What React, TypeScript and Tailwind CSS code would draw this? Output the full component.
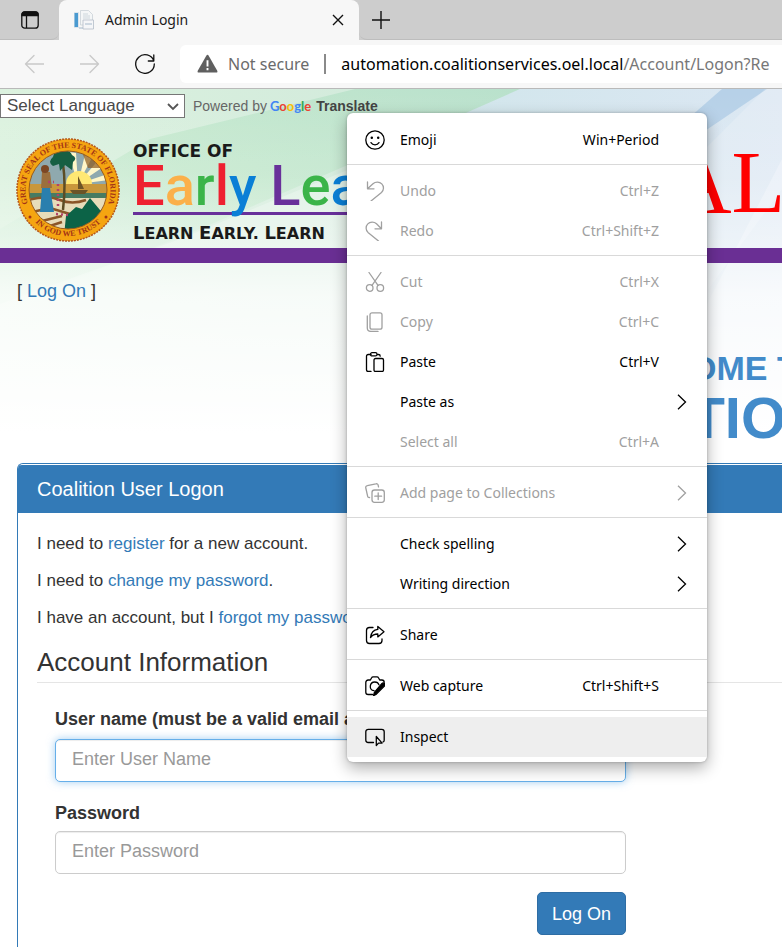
import type { ReactNode } from "react";

const SANS = "font-['Liberation_Sans',Arial,sans-serif]";
const UI = "font-['Noto_Sans','Open_Sans',sans-serif]";

function Icon({ children, className = "" }: { children: ReactNode; className?: string }) {
  return (
    <svg viewBox="0 0 20 20" fill="none" stroke="currentColor" strokeWidth="1.3" strokeLinecap="round" strokeLinejoin="round" className={`size-5 ${className}`} aria-hidden="true">
      {children}
    </svg>
  );
}

const icons = {
  emoji: (
    <Icon>
      <circle cx="10" cy="10" r="9.2" />
      <path d="M6 12.6c1.8 2.9 6.2 2.9 8 0" />
      <circle cx="6.8" cy="7.8" r=".6" fill="currentColor" />
      <circle cx="13.2" cy="7.8" r=".6" fill="currentColor" />
    </Icon>
  ),
  undo: (
    <Icon>
      <path d="M2.5 1v6.8H9M2.8 7.5 8 2.7c2.5-2.3 6.5-2.2 8.8.2 2.3 2.4 2.2 6.2-.3 8.5L6 20" />
    </Icon>
  ),
  redo: (
    <Icon>
      <path d="M16.5 1v6.8H10M16.2 7.5 11.5 2.7C9 .4 5 .5 2.8 2.9.5 5.3.6 9.1 3 11.4L13.5 20" />
    </Icon>
  ),
  cut: (
    <Icon>
      <path d="M4 .5 13 13.4M16 .5 7 13.4" />
      <circle cx="4.7" cy="16" r="3.3" />
      <circle cx="15.3" cy="16" r="3.3" />
    </Icon>
  ),
  copy: (
    <Icon>
      <rect x="5" y=".8" width="12" height="16.4" rx="2" />
      <path d="M2.3 4v12c0 2 1.5 3.4 3.5 3.4H13" />
    </Icon>
  ),
  paste: (
    <Icon>
      <path d="M6 2.5H3.2c-1 0-1.7.7-1.7 1.700v13.600c0 1 .7 1.700 1.700 1.700H6M12.500 2.500h1c1 0 1.700.7 1.700 1.700" />
      <rect x="5.5" y=".7" width="6.5" height="3.2" rx="1.5" />
      <rect x="9" y="6.5" width="9.5" height="13" rx="1.5" />
    </Icon>
  ),
  collections: (
    <Icon>
      <rect x="7" y="7" width="12.3" height="12.3" rx="2.5" />
      <path d="M13.2 9.8v6.8M9.8 13.2h6.8M4.6 14.500c-1 .2-1.800-.4-2-1.400L.8 5c-.3-1.200.4-2.200 1.500-2.400L10.800.8c1.200-.3 2.200.4 2.400 1.500l.3 1.600" />
    </Icon>
  ),
  share: (
    <Icon>
      <path d="M8 2.5H4.5c-1.700 0-3 1.300-3 3v10c0 1.700 1.300 3 3 3h9.500c1.700 0 3-1.300 3-3v-1.500" />
      <path d="M12.8 1.5 19 6.700l-6.200 5.200V9c-3 0-5.300.8-7.300 3.500C6 8.500 8.500 4.800 12.800 4.400z" />
    </Icon>
  ),
  capture: (
    <Icon>
      <path d="M7.5 18.5H3.2C1.8 18.5.8 17.500.8 16.200V6.400C.8 5 1.800 4 3.200 4h2.200l1.200-2.200c.3-.6.8-.9 1.500-.9h3.900c.7 0 1.200.3 1.500.9L14.700 4h2.200c1.300 0 2.300 1 2.300 2.300" />
      <path d="M9 14.700c-2.300-.4-3.900-2.300-3.700-4.600.2-2.300 2.100-4.100 4.500-4.100 2 0 3.600 1.200 4.200 2.900" />
      <path d="M16.800 7.600c.9-.9 2.200-.8 2.800 0 .6.700.5 1.700-.2 2.500l-8 8-2.900 1.600.9-3.300z" fill="currentColor" />
    </Icon>
  ),
  inspect: (
    <Icon>
      <path d="M8.5 15.5H3.3C1.900 15.500.8 14.400.8 13V4.800c0-1.400 1.100-2.500 2.500-2.500h13.400c1.400 0 2.500 1.100 2.500 2.500v8.400c0 .8-.5 1.500-1.200 1.800" />
      <path d="M11.3 9.500v9l2.200-2.400h3.600z" />
    </Icon>
  ),
};

type Item = { label: string; keys?: string; icon?: ReactNode; sub?: boolean; off?: boolean; active?: boolean };

const groups: Item[][] = [
  [{ label: "Emoji", keys: "Win+Period", icon: icons.emoji }],
  [
    { label: "Undo", keys: "Ctrl+Z", icon: icons.undo, off: true },
    { label: "Redo", keys: "Ctrl+Shift+Z", icon: icons.redo, off: true },
  ],
  [
    { label: "Cut", keys: "Ctrl+X", icon: icons.cut, off: true },
    { label: "Copy", keys: "Ctrl+C", icon: icons.copy, off: true },
    { label: "Paste", keys: "Ctrl+V", icon: icons.paste },
    { label: "Paste as", sub: true },
    { label: "Select all", keys: "Ctrl+A", off: true },
  ],
  [{ label: "Add page to Collections", icon: icons.collections, sub: true, off: true }],
  [
    { label: "Check spelling", sub: true },
    { label: "Writing direction", sub: true },
  ],
  [{ label: "Share", icon: icons.share }],
  [{ label: "Web capture", keys: "Ctrl+Shift+S", icon: icons.capture }],
  [{ label: "Inspect", icon: icons.inspect, active: true }],
];

function ContextMenu() {
  return (
    <div role="menu" className={`absolute left-[347px] top-[113px] z-20 w-[360px] rounded-md bg-white pt-[7px] pb-[5px] shadow-[0_6px_16px_rgba(0,0,0,0.32),0_0_3px_rgba(0,0,0,0.25)] ${UI}`}>
      {groups.map((items, g) => (
        <div key={g} className={g > 0 ? "mt-1 border-t border-[#d9d9d9] pt-1.5" : ""}>
          {items.map((it) => (
            <button
              key={it.label}
              type="button"
              role="menuitem"
              disabled={it.off}
              className={`flex h-10 w-full items-center pl-[18px] text-left text-sm ${it.off ? "text-[#a0a0a0]" : "text-black"} ${it.active ? "bg-[#eeeeee]" : ""}`}
            >
              <span className="mr-[15px] flex size-5 shrink-0">{it.icon}</span>
              <span className="flex-1">{it.label}</span>
              {it.keys && <span className="mr-12">{it.keys}</span>}
              {it.sub && (
                <svg viewBox="0 0 10 16" fill="none" stroke="currentColor" strokeWidth="1.3" className="mr-5 h-4 w-2.5" aria-hidden="true">
                  <path d="M1 .8 8.5 8 1 15.2" />
                </svg>
              )}
            </button>
          ))}
        </div>
      ))}
    </div>
  );
}

function BrowserChrome() {
  return (
    <header className={`shrink-0 border-b border-[#b9b9b9] bg-[#f7f7f7] ${UI}`}>
      <div className="flex h-10 bg-[#cdcdcd]">
        <button type="button" aria-label="Tab actions" className="flex w-[59px] items-center justify-center rounded-br-lg border-b border-[#bdbdbd]">
          <svg viewBox="0 0 18 18" className="size-[18px]" fill="none" stroke="#111" strokeWidth="1.3" aria-hidden="true">
            <rect x=".8" y=".8" width="16.4" height="16.4" rx="3" />
            <path d="M1 4.500V3.500Q1 1 3.500 1h11Q17 1 17 3.500v1z" fill="#111" />
            <path d="M5.500 4.500V17" />
          </svg>
        </button>
        <div className="flex w-[300px] items-center rounded-t-lg bg-[#f7f7f7] pl-[15px] pr-[15px]">
          <svg viewBox="0 0 20 20" className="size-5 shrink-0" aria-hidden="true">
            <path d="M0 2h5v16H0z" fill="#dde5ec" />
            <path d="M.5 3H4v14H.5z" fill="#4a9ad0" />
            <path d="M6.500.5h8l4 4V15h-12z" fill="#f4f6f7" stroke="#c4cdd2" strokeWidth=".7" />
            <path d="M9 4h5M9 6h7M9 8h7" stroke="#c5d0d7" strokeWidth=".8" />
            <path d="M9 10h10.500v9H9z" fill="#f5f6f8" stroke="#b4bdc8" strokeWidth=".8" />
            <path d="M11 14h7M5 18h4" stroke="#a6b9cb" />
          </svg>
          <span className="ml-[11px] flex-1 text-sm text-[#1b1b1b]">Admin Login</span>
          <button type="button" aria-label="Close tab">
            <svg viewBox="0 0 12 12" className="size-3" stroke="#111" strokeWidth="1.4" aria-hidden="true">
              <path d="M1 1l10 10M11 1 1 11" />
            </svg>
          </button>
        </div>
        <button type="button" aria-label="New tab" className="flex flex-1 items-center rounded-bl-lg border-b border-[#bdbdbd] pl-[13px]">
          <svg viewBox="0 0 18 18" className="size-[18px]" stroke="#111" strokeWidth="1.4" aria-hidden="true">
            <path d="M9 0v18M0 9h18" />
          </svg>
        </button>
      </div>
      <div className="flex h-12 items-center pl-6">
        <button type="button" aria-label="Back" className="text-[#c9c9c9]">
          <Icon>
            <path d="M20 10H1.5M10 1.500 1.500 10l8.500 8.500" />
          </Icon>
        </button>
        <button type="button" aria-label="Forward" className="ml-9 text-[#c9c9c9]">
          <Icon>
            <path d="M0 10h18.500M10 1.500 18.500 10 10 18.500" />
          </Icon>
        </button>
        <button type="button" aria-label="Refresh" className="ml-[35px] text-[#111]">
          <Icon>
            <path d="M18.800 7A9.300 9.300 0 1 0 19.300 10M18.800 1v6h-5.500" />
          </Icon>
        </button>
        <div className="ml-[25px] flex h-[38px] min-w-0 flex-1 items-center overflow-hidden rounded-l-md bg-white pl-[17px] text-base whitespace-nowrap">
          <svg viewBox="0 0 22 20" className="h-5 w-[21px] shrink-0" aria-hidden="true">
            <path d="M9.600 1.500q1.400-2.200 2.800 0l8.800 15.700q.8 1.800-1.200 1.800H2q-2 0-1.200-1.800z" fill="#5f5f5f" />
            <path d="M11 6v6.500M11 14.200v2.300" stroke="#fff" strokeWidth="2" />
          </svg>
          <span className="ml-2.5 text-[#6b6b6b]">Not secure</span>
          <span className="mx-[15px] h-5 w-0.5 shrink-0 bg-[#8a8a8a]" />
          <span className="text-black">
            automation.coalitionservices.oel.local<span className="text-[#777]">/Account/Logon?Re</span>
          </span>
        </div>
      </div>
    </header>
  );
}

function Backdrop() {
  return (
    <svg viewBox="0 0 782 345" preserveAspectRatio="none" className="absolute inset-x-0 top-0 h-[345px] w-full" aria-hidden="true">
      <defs>
        <linearGradient id="sky" x1="0" x2="1">
          <stop offset="0" stopColor="#dcf2df" />
          <stop offset=".45" stopColor="#d3ebdc" />
          <stop offset=".6" stopColor="#d2e6ec" />
          <stop offset="1" stopColor="#dbe7f3" />
        </linearGradient>
        <linearGradient id="fade" x1="0" y1="0" x2="0" y2="1">
          <stop offset="0" stopColor="#fff" stopOpacity="0" />
          <stop offset=".25" stopColor="#fff" stopOpacity=".1" />
          <stop offset=".45" stopColor="#fff" stopOpacity=".4" />
          <stop offset=".6" stopColor="#fff" stopOpacity=".75" />
          <stop offset="1" stopColor="#fff" />
        </linearGradient>
        <linearGradient id="green" x1="1" y1="0" x2="0" y2="1">
          <stop offset="0" stopColor="#b9e1cc" />
          <stop offset=".5" stopColor="#c3e8cc" stopOpacity=".8" />
          <stop offset="1" stopColor="#d8f0de" stopOpacity=".2" />
        </linearGradient>
      </defs>
      <path d="M0 0h782v345H0z" fill="url(#sky)" />
      <path d="M150 50 355 0h165L350 75 200 140 0 220v-80z" fill="url(#green)" />
      <path d="M180 150 350 80v265H0V215z" fill="#fff" opacity=".25" />
      <path d="M722 0h45L690 52V28z" fill="#abcae4" opacity=".75" />
      <path d="M765 0h17v100L690 225V75z" fill="#fff" opacity=".2" />
      <path d="M782 70v275H640z" fill="#fff" opacity=".28" />
      <path d="M0 0h782v345H0z" fill="url(#fade)" />
    </svg>
  );
}

function Seal() {
  return (
    <svg viewBox="0 0 104 104" className="size-[104px] shrink-0" role="img" aria-label="State seal">
      <defs>
        <path id="sealTop" d="M15 73A42.500 42.500 0 1 1 89 73" />
        <path id="sealBottom" d="M14 78A46 46 0 0 0 90 78" />
        <clipPath id="sealClip">
          <circle cx="52" cy="52" r="39" />
        </clipPath>
      </defs>
      <circle cx="52" cy="52" r="51" fill="#f5a511" stroke="#b5551a" strokeWidth="1.5" strokeDasharray="2 1" />
      <g clipPath="url(#sealClip)">
        <path d="M0 0h104v104H0z" fill="#b9c2a0" />
        <path d="M10 10h84v36H10z" fill="#8fa9ae" />
        <path d="M62 46 52 14l8 1zM62 46 70 12l8 4zM62 46 84 20l6 7zM62 46 92 36v6z" fill="#fff6c8" />
        <path d="M66 14 96 16 94 30 72 30z" fill="#8b5a1c" opacity=".7" />
        <path d="M50 46a13 13 0 0 1 26 0z" fill="#ffe873" />
        <path d="M12 46h80v9H12z" fill="#c9973b" />
        <path d="M12 55h80v6H12z" fill="#477b62" />
        <path d="M54 52h18l-3 4H57zM62 38l6 13h-6z" fill="#6c5427" />
        <path d="M12 60h80v36H12z" fill="#e7dcb9" />
        <path d="M12 62q20-5 32 0t26 0M16 74l18-4 20 6M22 84l24-6M28 90l18-6" stroke="#8a5528" strokeWidth="2.5" fill="none" />
        <path d="M47 26q3 20 0 46" stroke="#5c4d25" strokeWidth="2.5" fill="none" />
        <path d="M47 13q-9-1-10 6-6 5 0 9l6-2 1 7 5-6 7 5 1-8q5-4-1-7-2-5-9-4z" fill="#175f43" />
        <path d="m50 78 10-9 6 2 8-11 10 12 8 4-4 22H48z" fill="#0c6347" />
        <path d="M26 50h8l4 24H24z" fill="#2a7fae" />
        <path d="M26 34h8l2 16H25z" fill="#9b6f3d" />
        <circle cx="29" cy="31" r="4" fill="#7c4724" />
        <path d="M32 44h6M42 46v24M40 76l12 1" stroke="#b2426a" strokeWidth="2.5" strokeDasharray="2 3" />
      </g>
      <circle cx="52" cy="52" r="39" fill="none" stroke="#9a5a19" />
      <g fill="#a33416" className="font-['Liberation_Serif',serif] text-[8px] font-bold">
        <text textAnchor="middle">
          <textPath href="#sealTop" startOffset="50%">GREAT SEAL OF THE STATE OF FLORIDA</textPath>
        </text>
        <text textAnchor="middle">
          <textPath href="#sealBottom" startOffset="50%">IN GOD WE TRUST</textPath>
        </text>
      </g>
      <circle cx="14" cy="79" r="1.5" fill="#a33416" />
      <circle cx="90" cy="79" r="1.5" fill="#a33416" />
    </svg>
  );
}

const early = [
  ["E", "text-[#ee2030]"],
  ["a", "text-[#fbb04a]"],
  ["r", "text-[#3bb449]"],
  ["l", "text-[#ee2030]"],
  ["y", "text-[#0a7fd6]"],
  [" ", ""],
  ["L", "text-[#68309a]"],
  ["e", "text-[#3bb449]"],
  ["a", "text-[#0a7fd6]"],
];

function Motto() {
  return (
    <p className="mt-1.5 font-['DejaVu_Sans',sans-serif] text-base leading-6 font-bold text-[#1a1a1a]">
      <span className="text-lg leading-6">L</span>EARN <span className="text-lg leading-6">E</span>ARLY. <span className="text-lg leading-6">L</span>EARN
    </p>
  );
}

function Banner() {
  return (
    <div className="relative flex h-[129px] shrink-0 items-start pl-4 pt-[19px]">
      <Seal />
      <div className="ml-[13px] w-[230px] whitespace-nowrap">
        <p className="font-['DejaVu_Sans',sans-serif] text-[17px] leading-[26px] font-bold text-[#1a1a1a]">OFFICE OF</p>
        <p className="h-12 font-['Roboto',sans-serif] text-[56px] leading-[44px] font-medium">
          {early.map(([ch, tone], i) => (
            <span key={i} className={tone}>
              {ch}
            </span>
          ))}
        </p>
        <div className="h-[3px] bg-[#68309a]" />
        <Motto />
      </div>
      <p className="absolute left-[668px] top-0 font-['Liberation_Serif',serif] text-[88px] leading-[127px] text-[#ff0000]">AL</p>
    </div>
  );
}

function Translate() {
  return (
    <div className={`relative flex h-[30px] shrink-0 items-start pt-[5px] ${SANS}`}>
      <div className="relative flex">
        <select aria-label="Select Language" className="h-6 w-[185px] appearance-none border border-[#767676] bg-white pl-1.5 text-[17px] leading-5 text-[#4a4a4a]">
          <option>Select Language</option>
        </select>
        <svg viewBox="0 0 12 8" className="pointer-events-none absolute right-1.5 top-[9px] h-2 w-3" fill="none" stroke="#555" strokeWidth="1.8" aria-hidden="true">
          <path d="M1 1l5 5 5-5" />
        </svg>
      </div>
      <p className="ml-2 flex text-sm leading-6 text-[#666]">
        Powered by
        <span className="ml-[3px] font-['Lato',sans-serif] text-[13px] font-bold">
          <span className="text-[#4285f4]">G</span>
          <span className="text-[#ea4335]">o</span>
          <span className="text-[#fbbc05]">o</span>
          <span className="text-[#4285f4]">g</span>
          <span className="text-[#34a853]">l</span>
          <span className="text-[#ea4335]">e</span>
        </span>
        <b className="ml-[5px] text-[#444]">Translate</b>
      </p>
    </div>
  );
}

const link = "text-[#337ab7]";
const field = "block w-full max-w-[571px] rounded-[5px] border bg-white px-4 pb-0.5 text-lg placeholder:text-[#999]";

function LogonPanel() {
  return (
    <section className="ml-[17px] mt-[15px] flex-1 rounded-tl-md border-l border-t border-[#337ab7] pt-px">
      <h3 className="rounded-tl bg-[#337ab7] pl-[19px] text-xl leading-[48px] text-white">Coalition User Logon</h3>
      <div className="pl-[19px] pt-[18px]">
        <div className="flex flex-col gap-[11px] text-[17px] leading-[26px]">
          <p>
            I need to <a href="#register" className={link}>register</a> for a new account.
          </p>
          <p>
            I need to <a href="#change" className={link}>change my password</a>.
          </p>
          <p>
            I have an account, but I <a href="#forgot" className={link}>forgot my password</a>.
          </p>
        </div>
        <form>
          <fieldset>
            <legend className="w-full border-b border-[#e5e5e5] pt-[11px] text-[26px] leading-10">Account Information</legend>
            <div className="pl-[18px] pt-[23px]">
              <label htmlFor="user" className="block leading-[26px] font-bold">User name (must be a valid email address)</label>
              <input id="user" type="text" placeholder="Enter User Name" className={`${field} mt-[7px] h-[43px] border-[#66afe9] shadow-[inset_0_1px_1px_rgba(0,0,0,0.075),0_0_8px_rgba(102,175,233,0.6)]`} />
              <label htmlFor="pass" className="mt-[18px] block leading-[26px] font-bold">Password</label>
              <input id="pass" type="password" placeholder="Enter Password" className={`${field} mt-[5px] h-[43px] border-[#ccc] shadow-[inset_0_1px_1px_rgba(0,0,0,0.075)]`} />
              <div className="mt-[18px] flex max-w-[571px] justify-end">
                <button type="submit" className="h-[43px] rounded-[5px] border border-[#2e6da4] bg-[#337ab7] px-3.5 text-white">Log On</button>
              </div>
            </div>
          </fieldset>
        </form>
      </div>
    </section>
  );
}

export default function App() {
  return (
    <div className="relative flex h-screen flex-col overflow-hidden bg-white">
      <BrowserChrome />
      <main className={`relative flex flex-1 flex-col text-lg text-[#333] ${SANS}`}>
        <Backdrop />
        <Translate />
        <Banner />
        <div className="relative h-[15px] shrink-0 bg-[#6a2f94]" />
        <div className="relative flex flex-1 flex-col">
          <p className="pl-[17px] pt-[15px] leading-[26px]">
            [ <a href="#logon" className={link}>Log On</a> ]
          </p>
          <div className="mt-[44px] overflow-hidden font-bold whitespace-nowrap text-[#428bca]">
            <h2 className="pl-[590px] text-[34px] leading-10">WELCOME TO</h2>
            <h1 className="pl-[509px] text-[58px] leading-[60px]">COALITION</h1>
          </div>
          <LogonPanel />
        </div>
      </main>
      <ContextMenu />
    </div>
  );
}
